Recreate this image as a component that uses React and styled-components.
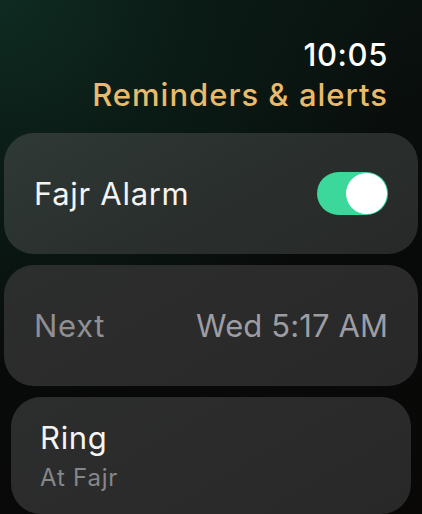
import React from 'react';
import styled, { createGlobalStyle } from 'styled-components';

const GlobalStyle = createGlobalStyle`
  html, body {
    margin: 0;
    padding: 0;
    background: #070908;
  }
  * {
    box-sizing: border-box;
  }
`;

const Screen = styled.div`
  width: 422px;
  height: 514px;
  overflow: hidden;
  font-family: 'Inter', 'Noto Sans', sans-serif;
  background:
    radial-gradient(ellipse 120% 90% at 0% 0%, #0f2b21 0%, #0a1a14 40%, rgba(8, 10, 9, 0) 80%),
    linear-gradient(160deg, #0b1712 0%, #080909 60%, #090807 100%);
  display: flex;
  flex-direction: column;
`;

const Header = styled.header`
  display: flex;
  flex-direction: column;
  align-items: flex-end;
  padding: 38px 34px 0 0;
`;

const Time = styled.div`
  color: #ffffff;
  font-size: 31px;
  font-weight: 500;
  line-height: 34px;
  letter-spacing: 0.6px;
`;

const Title = styled.h1`
  margin: 6px 0 0;
  color: #e8bb6c;
  font-size: 31px;
  font-weight: 500;
  line-height: 34px;
  letter-spacing: 1px;
`;

const List = styled.div`
  display: flex;
  flex-direction: column;
  gap: 11px;
  margin-top: 21px;
`;

const Card = styled.div`
  margin: 0 ${(p) => (p.$inset ? 11 : 4)}px;
  height: ${(p) => (p.$inset ? 117 : 121)}px;
  border-radius: 30px;
  padding: 0 ${(p) => (p.$inset ? 29 : 30)}px;
  display: flex;
  flex-direction: ${(p) => (p.$stacked ? 'column' : 'row')};
  justify-content: ${(p) => (p.$stacked ? 'flex-start' : 'space-between')};
  align-items: ${(p) => (p.$stacked ? 'flex-start' : 'center')};
  padding-top: ${(p) => (p.$stacked ? 24 : 0)}px;
  background: ${(p) =>
    p.$tinted
      ? 'linear-gradient(150deg, #2f3936 0%, #2a302e 45%, #272928 100%)'
      : 'linear-gradient(150deg, #2c2e2d 0%, #2a2b2a 50%, #282828 100%)'};
`;

const Label = styled.span`
  color: ${(p) => (p.$muted ? '#8f8f94' : '#f4f4f4')};
  font-size: 31px;
  font-weight: 400;
  letter-spacing: 0.7px;
  line-height: 34px;
`;

const Value = styled.span`
  color: #9d9da3;
  font-size: 31px;
  font-weight: 400;
  letter-spacing: 0.1px;
  line-height: 34px;
`;

const Subtitle = styled.span`
  margin-top: 9px;
  color: #86868b;
  font-size: 24px;
  font-weight: 400;
  letter-spacing: 0.8px;
  line-height: 28px;
`;

const Toggle = styled.div`
  width: 71px;
  height: 43px;
  border-radius: 22px;
  background: ${(p) => (p.$on ? '#3bd79b' : '#3a3a3c')};
  padding: 1px;
  display: flex;
  justify-content: ${(p) => (p.$on ? 'flex-end' : 'flex-start')};
  align-items: center;
`;

const Knob = styled.div`
  width: 41px;
  height: 41px;
  border-radius: 50%;
  background: #ffffff;
`;

export default function App() {
  return (
    <>
      <GlobalStyle />
      <Screen>
        <Header>
          <Time>10:05</Time>
          <Title>Reminders &amp; alerts</Title>
        </Header>
        <List>
          <Card $tinted>
            <Label>Fajr Alarm</Label>
            <Toggle $on>
              <Knob />
            </Toggle>
          </Card>
          <Card>
            <Label $muted>Next</Label>
            <Value>Wed 5:17 AM</Value>
          </Card>
          <Card $inset $stacked>
            <Label>Ring</Label>
            <Subtitle>At Fajr</Subtitle>
          </Card>
        </List>
      </Screen>
    </>
  );
}
